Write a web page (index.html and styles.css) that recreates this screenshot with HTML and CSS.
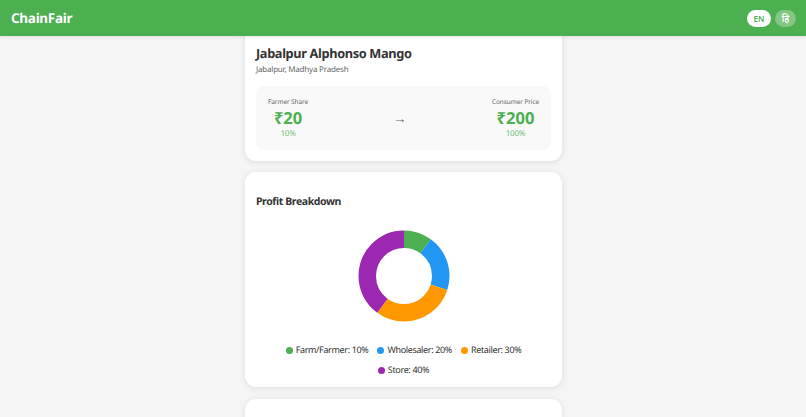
FILE: index.html
```html
<!DOCTYPE html>
<html lang="en">
<head>
  <meta charset="UTF-8" />
  <title>ChainFair</title>
  <link rel="stylesheet" href="styles.css">
</head>
<body>
  <header class="topbar">
    <div class="logo">ChainFair</div>
    <div class="lang">
      <button class="lang-btn active">EN</button>
      <button class="lang-btn">हि</button>
    </div>
  </header>

  <main class="content">
    <section class="card product">
      <h1>Jabalpur Alphonso Mango</h1>
      <p class="place">Jabalpur, Madhya Pradesh</p>
      <div class="price-box">
        <div class="price">
          <div class="price-label">Farmer Share</div>
          <div class="price-value">₹20</div>
          <div class="price-pct">10%</div>
        </div>
        <div class="arrow">→</div>
        <div class="price">
          <div class="price-label">Consumer Price</div>
          <div class="price-value">₹200</div>
          <div class="price-pct">100%</div>
        </div>
      </div>
    </section>

    <section class="card breakdown">
      <h2>Profit Breakdown</h2>
      <svg class="donut" width="92" height="92" viewBox="0 0 92 92">
        <g fill="none" stroke-width="17.5" transform="rotate(-90 46 46)">
          <circle cx="46" cy="46" r="36.75" pathLength="100" stroke="#4caf50" stroke-dasharray="10 90" stroke-dashoffset="0" />
          <circle cx="46" cy="46" r="36.75" pathLength="100" stroke="#2196f3" stroke-dasharray="20 80" stroke-dashoffset="-10" />
          <circle cx="46" cy="46" r="36.75" pathLength="100" stroke="#ff9800" stroke-dasharray="30 70" stroke-dashoffset="-30" />
          <circle cx="46" cy="46" r="36.75" pathLength="100" stroke="#9c27b0" stroke-dasharray="40 60" stroke-dashoffset="-60" />
        </g>
      </svg>
      <ul class="legend">
        <li><span class="dot green"></span>Farm/Farmer: 10%</li>
        <li><span class="dot blue"></span>Wholesaler: 20%</li>
        <li><span class="dot orange"></span>Retailer: 30%</li>
        <li><span class="dot purple"></span>Store: 40%</li>
      </ul>
    </section>

    <section class="card next"></section>
  </main>
</body>
</html>
```

FILE: styles.css
```css
html, body {
  height: 100%;
}

body {
  margin: 0;
  overflow: hidden;
  background: #f5f5f5;
  color: #333;
  font-family: "Noto Sans", "Open Sans", sans-serif;
  text-rendering: geometricPrecision;
}

.topbar {
  position: relative;
  z-index: 2;
  height: 36px;
  padding: 0 10px 0 11px;
  display: flex;
  justify-content: space-between;
  align-items: center;
  background: #4caf50;
  box-shadow: 0 1px 3px rgba(0, 0, 0, 0.1);
}

.logo {
  color: #fff;
  font-size: 13.5px;
  font-weight: 700;
  letter-spacing: -0.3px;
}

.lang {
  display: flex;
  gap: 4px;
}

.lang-btn {
  height: 17px;
  width: 21px;
  padding: 0;
  border: none;
  border-radius: 9px;
  background: rgba(255, 255, 255, 0.3);
  color: #fff;
  font-family: inherit;
  font-size: 9px;
  font-weight: 600;
}

.lang-btn.active {
  width: 24px;
  background: #fff;
  color: #4caf50;
  font-size: 8px;
}

.content {
  width: 318px;
  box-sizing: border-box;
  margin: -30px auto 0;
  padding-left: 1px;
  display: flex;
  flex-direction: column;
  gap: 11px;
}

.card {
  padding: 11px;
  background: #fff;
  border-radius: 11px;
  box-shadow: 0 1px 6px rgba(0, 0, 0, 0.1);
}

.product {
  height: 155px;
  box-sizing: border-box;
  padding-top: 38px;
}

.product h1 {
  margin: 0;
  font-size: 12.75px;
  font-weight: 700;
  line-height: 18px;
  letter-spacing: -0.35px;
}

.place {
  margin: 2px 0 0;
  color: #666;
  font-size: 8px;
  line-height: 12px;
  letter-spacing: -0.2px;
}

.price-box {
  margin-top: 10px;
  height: 64px;
  box-sizing: border-box;
  padding: 0 12px;
  display: flex;
  justify-content: space-between;
  align-items: center;
  background: #f9f9f9;
  border-radius: 8px;
}

.price {
  text-align: center;
}

.price-label {
  color: #666;
  font-size: 6.5px;
  line-height: 10px;
  letter-spacing: -0.1px;
}

.price-value {
  color: #4caf50;
  font-size: 16.5px;
  font-weight: 700;
  line-height: 21px;
}

.price-pct {
  color: #4caf50;
  font-size: 8px;
  line-height: 11px;
  letter-spacing: -0.2px;
  opacity: 0.8;
}

.arrow {
  color: #666;
  font-size: 13px;
  line-height: 16px;
  margin-bottom: 1px;
}

.breakdown {
  height: 215px;
  box-sizing: border-box;
  display: flex;
  flex-direction: column;
  align-items: center;
}

.breakdown h2 {
  align-self: flex-start;
  margin: 11px 0 0;
  font-size: 10.5px;
  font-weight: 700;
  line-height: 16px;
  letter-spacing: -0.4px;
}

.donut {
  margin-top: 20px;
}

.legend {
  margin: 22px 0 0;
  padding: 0;
  list-style: none;
  display: flex;
  flex-wrap: wrap;
  justify-content: center;
  gap: 8px 9px;
}

.legend li {
  display: flex;
  align-items: center;
  gap: 3px;
  font-size: 9px;
  line-height: 12px;
  letter-spacing: -0.35px;
}

.dot {
  width: 7px;
  height: 7px;
  border-radius: 50%;
}

.green { background: #4caf50; }
.blue { background: #2196f3; }
.orange { background: #ff9800; }
.purple { background: #9c27b0; }

.next {
  height: 18px;
  box-sizing: border-box;
  margin-top: 1px;
  padding: 0;
  border-radius: 11px 11px 0 0;
}
```
